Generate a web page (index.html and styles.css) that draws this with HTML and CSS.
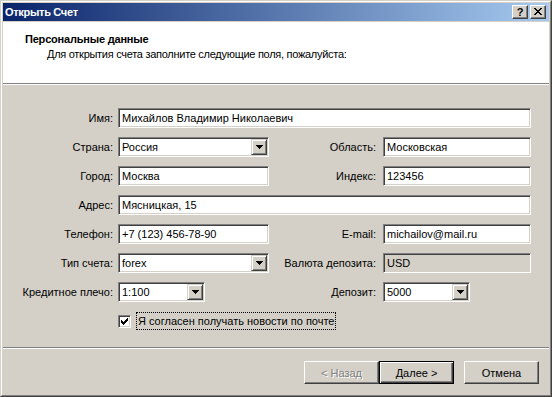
FILE: index.html
```html
<!DOCTYPE html>
<html lang="ru">
<head>
<meta charset="utf-8">
<title>Открыть Счет</title>
<link rel="stylesheet" href="styles.css">
</head>
<body>
<div class="window">
  <div class="frame">
    <div class="titlebar">
      <span class="title">Открыть Счет</span>
      <div class="capbtns">
        <span class="capbtn help">?</span>
        <span class="capbtn close">
          <svg width="8" height="7" viewBox="0 0 8 7" shape-rendering="crispEdges">
            <rect x="0" y="0" width="2" height="1"/><rect x="6" y="0" width="2" height="1"/>
            <rect x="1" y="1" width="2" height="1"/><rect x="5" y="1" width="2" height="1"/>
            <rect x="2" y="2" width="4" height="1"/>
            <rect x="3" y="3" width="2" height="1"/>
            <rect x="2" y="4" width="4" height="1"/>
            <rect x="1" y="5" width="2" height="1"/><rect x="5" y="5" width="2" height="1"/>
            <rect x="0" y="6" width="2" height="1"/><rect x="6" y="6" width="2" height="1"/>
          </svg>
        </span>
      </div>
    </div>
    <div class="client">
      <div class="header">
        <div class="h-title">Персональные данные</div>
        <div class="h-sub">Для открытия счета заполните следующие поля, пожалуйста:</div>
      </div>
      <div class="form">
        <div class="lbl l1">Имя:</div>
        <div class="edit wide">Михайлов Владимир Николаевич</div>

        <div class="lbl l1">Страна:</div>
        <div class="combo">
          <span class="ctext">Россия</span>
          <span class="cbtn"><svg width="7" height="4" viewBox="0 0 7 4" shape-rendering="crispEdges"><rect x="0" y="0" width="7" height="1"/><rect x="1" y="1" width="5" height="1"/><rect x="2" y="2" width="3" height="1"/><rect x="3" y="3" width="1" height="1"/></svg></span>
        </div>
        <div class="lbl l3">Область:</div>
        <div class="edit">Московская</div>

        <div class="lbl l1">Город:</div>
        <div class="edit">Москва</div>
        <div class="lbl l3">Индекс:</div>
        <div class="edit">123456</div>

        <div class="lbl l1">Адрес:</div>
        <div class="edit wide">Мясницкая, 15</div>

        <div class="lbl l1">Телефон:</div>
        <div class="edit">+7 (123) 456-78-90</div>
        <div class="lbl l3">E-mail:</div>
        <div class="edit">michailov@mail.ru</div>

        <div class="lbl l1">Тип счета:</div>
        <div class="combo">
          <span class="ctext">forex</span>
          <span class="cbtn"><svg width="7" height="4" viewBox="0 0 7 4" shape-rendering="crispEdges"><rect x="0" y="0" width="7" height="1"/><rect x="1" y="1" width="5" height="1"/><rect x="2" y="2" width="3" height="1"/><rect x="3" y="3" width="1" height="1"/></svg></span>
        </div>
        <div class="lbl l3">Валюта депозита:</div>
        <div class="edit disabled">USD</div>

        <div class="lbl l1">Кредитное плечо:</div>
        <div class="combo small">
          <span class="ctext">1:100</span>
          <span class="cbtn"><svg width="7" height="4" viewBox="0 0 7 4" shape-rendering="crispEdges"><rect x="0" y="0" width="7" height="1"/><rect x="1" y="1" width="5" height="1"/><rect x="2" y="2" width="3" height="1"/><rect x="3" y="3" width="1" height="1"/></svg></span>
        </div>
        <div class="lbl l3">Депозит:</div>
        <div class="combo small">
          <span class="ctext">5000</span>
          <span class="cbtn"><svg width="7" height="4" viewBox="0 0 7 4" shape-rendering="crispEdges"><rect x="0" y="0" width="7" height="1"/><rect x="1" y="1" width="5" height="1"/><rect x="2" y="2" width="3" height="1"/><rect x="3" y="3" width="1" height="1"/></svg></span>
        </div>

        <div class="checkrow">
          <span class="checkbox">
            <svg width="7" height="7" viewBox="0 0 7 7" shape-rendering="crispEdges">
              <rect x="0" y="2" width="1" height="3"/><rect x="1" y="3" width="1" height="3"/>
              <rect x="2" y="4" width="1" height="3"/><rect x="3" y="3" width="1" height="3"/>
              <rect x="4" y="2" width="1" height="3"/><rect x="5" y="1" width="1" height="3"/>
              <rect x="6" y="0" width="1" height="3"/>
            </svg>
          </span>
          <span class="checklabel">Я согласен получать новости по почте</span>
        </div>
      </div>
      <div class="sep"></div>
      <div class="buttons">
        <span class="btn disabled">&lt; Назад</span>
        <span class="btn default">Далее &gt;</span>
        <span class="btn cancel">Отмена</span>
      </div>
    </div>
  </div>
</div>
</body>
</html>
```

FILE: styles.css
```css
* { box-sizing: border-box; }
html, body { margin: 0; padding: 0; }
body {
  width: 552px;
  height: 397px;
  background: #d4d0c8;
  font-family: "Liberation Sans", Arial, sans-serif;
  font-size: 11px;
  color: #000;
}
.window {
  width: 552px;
  height: 397px;
  border: 1px solid;
  border-color: #d4d0c8 #404040 #404040 #d4d0c8;
}
.frame {
  height: 100%;
  border: 1px solid;
  border-color: #fff #808080 #808080 #fff;
  padding: 1px;
  background: #d4d0c8;
  display: flex;
  flex-direction: column;
}
.titlebar {
  height: 18px;
  margin-bottom: 1px;
  background: linear-gradient(to right, #0a246a, #a6caf0);
  display: flex;
  align-items: center;
  justify-content: space-between;
  padding: 0 3px 0 2px;
}
.title {
  color: #fff;
  font-weight: bold;
  font-size: 11px;
  line-height: 13px;
  letter-spacing: -0.3px;
}
.capbtns { display: flex; gap: 2px; }
.capbtn {
  width: 16px;
  height: 14px;
  background: #d4d0c8;
  border: 1px solid;
  border-color: #fff #404040 #404040 #fff;
  box-shadow: inset -1px -1px #808080;
  display: flex;
  align-items: center;
  justify-content: center;
  font-weight: bold;
  font-size: 11px;
  line-height: 11px;
  font-family: "Liberation Sans", sans-serif;
}
.capbtn svg { fill: #000; display: block; margin-top: -1px; }
.client {
  flex: 1;
  display: flex;
  flex-direction: column;
}
.header {
  height: 62px;
  background: #fff;
  border-bottom: 1px solid #808080;
  padding: 11px 0 0 22px;
}
.h-title { font-weight: bold; line-height: 13px; letter-spacing: -0.2px; }
.h-sub { line-height: 13px; margin: 2px 0 0 22px; letter-spacing: -0.28px; }
.form {
  border-top: 1px solid #fff;
  padding-top: 23px;
  padding-bottom: 16px;
  display: grid;
  grid-template-columns: 115px 151px 114px 148px;
  grid-auto-rows: 20px;
  row-gap: 9px;
  align-items: center;
}
.lbl {
  text-align: right;
  white-space: nowrap;
  line-height: 13px;
}
.l1 { grid-column: 1; padding-right: 5px; }
.l3 { grid-column: 3; padding-right: 7px; }
.edit, .combo {
  height: 20px;
  border: 1px solid;
  border-color: #808080 #fff #fff #808080;
  box-shadow: inset 1px 1px #404040, inset -1px -1px #d4d0c8;
  background: #fff;
  display: flex;
  align-items: center;
  white-space: nowrap;
  overflow: hidden;
}
.edit { padding: 0 3px; }
.edit.wide { grid-column: 2 / 5; }
.edit.disabled { background: #d4d0c8; }
.combo { padding: 1px; }
.combo.small { width: 87px; }
.ctext { flex: 1; padding-left: 2px; }
.cbtn {
  width: 16px;
  height: 16px;
  background: #d4d0c8;
  border: 1px solid;
  border-color: #d4d0c8 #404040 #404040 #d4d0c8;
  box-shadow: inset 1px 1px #fff, inset -1px -1px #808080;
  display: flex;
  align-items: center;
  justify-content: center;
}
.cbtn svg { fill: #000; display: block; }
.checkrow {
  grid-column: 2 / 5;
  display: flex;
  align-items: center;
}
.checkbox {
  width: 13px;
  height: 13px;
  border: 1px solid;
  border-color: #808080 #fff #fff #808080;
  box-shadow: inset 1px 1px #404040, inset -1px -1px #d4d0c8;
  background: #fff;
  display: flex;
  align-items: center;
  justify-content: center;
}
.checkbox svg { fill: #000; display: block; }
.checklabel {
  margin-left: 5px;
  border: 1px dotted #000;
  padding: 1px 1px;
  line-height: 14px;
  white-space: nowrap;
}
.sep {
  border-top: 1px solid #808080;
  border-bottom: 1px solid #fff;
}
.buttons {
  display: flex;
  justify-content: flex-end;
  padding: 12px 10px 0 0;
}
.btn {
  width: 75px;
  height: 23px;
  border: 1px solid;
  border-color: #fff #404040 #404040 #fff;
  box-shadow: inset -1px -1px #808080;
  display: flex;
  align-items: center;
  justify-content: center;
  white-space: nowrap;
}
.btn.disabled { color: #808080; text-shadow: 1px 1px #fff; }
.btn.default {
  border-color: #000;
  box-shadow: inset 1px 1px #fff, inset -1px -1px #404040, inset -2px -2px #808080;
}
.btn.cancel { margin-left: 10px; }
```
